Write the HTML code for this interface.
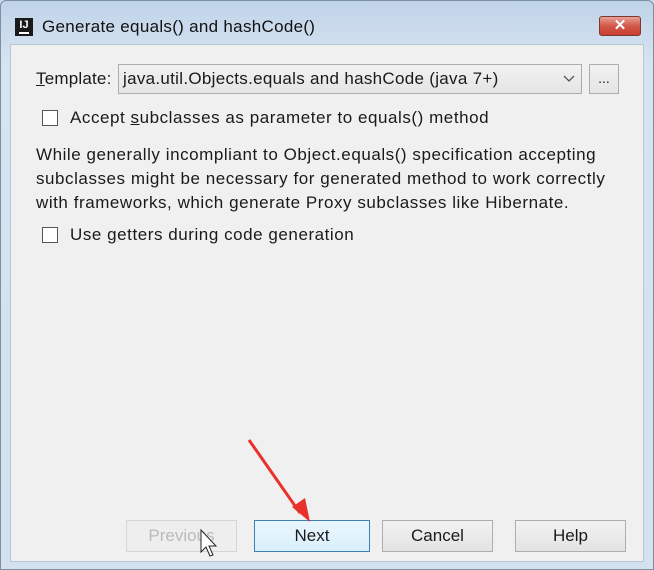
<!DOCTYPE html>
<html><head><meta charset="utf-8"><style>
*{margin:0;padding:0;box-sizing:border-box}
body{width:654px;height:570px;overflow:hidden;background:#ccdcec;font-family:"Liberation Sans",sans-serif;color:#1a1a1a;position:relative}
.frame{position:absolute;left:0;top:0;width:654px;height:570px;background:linear-gradient(#bfd3e8,#d6e3f1 60px,#d3e1f0);border:1px solid #7f8fa0;border-radius:6px 6px 0 0}
.title{position:absolute;left:42px;top:17px;font-size:17px;letter-spacing:0.3px;color:#111}
.icon{position:absolute;left:15px;top:18px;width:18px;height:18px;background:#1a1a1a;color:#fff;font-size:11px;font-weight:bold;text-align:center;line-height:14px}
.icon:after{content:"";position:absolute;left:4px;right:4px;bottom:2px;height:2px;background:#fff}
.close{position:absolute;left:599px;top:16px;width:42px;height:20px;border:1px solid #7a3a30;border-radius:3px;background:linear-gradient(#e9a197,#d2584a 50%,#c8402f);color:#fff;text-align:center;font-size:15px;font-weight:bold;line-height:18px}
.client{position:absolute;left:10px;top:44px;width:634px;height:518px;background:#f0f0f0;border:1px solid #b9c6d4}
.abs{position:absolute;font-size:17px;letter-spacing:0.55px;white-space:nowrap}
.cb{position:absolute;width:16px;height:16px;border:1px solid #555;background:#fff}
.combo{position:absolute;left:118px;top:64px;width:464px;height:30px;border:1px solid #acacac;background:linear-gradient(#f2f2f2,#e5e5e5)}
.dots{position:absolute;left:589px;top:64px;width:30px;height:30px;border:1px solid #acacac;background:linear-gradient(#f2f2f2,#e5e5e5);text-align:center;font-size:14px;line-height:26px}
.btn{position:absolute;top:520px;width:111px;height:32px;border:1px solid #adadad;background:linear-gradient(#f2f2f2,#e3e3e3);text-align:center;font-size:17px;line-height:30px}
</style></head><body>
<div class="frame"></div>
<div class="icon">IJ</div>
<div class="title">Generate equals() and hashCode()</div>
<div class="close">✕</div>
<div class="client"></div>
<div class="abs" style="left:36px;top:69px;letter-spacing:0.2px"><u>T</u>emplate:</div>
<div class="combo"></div>
<div class="abs" style="left:123px;top:69px;letter-spacing:0.3px">java.util.Objects.equals and hashCode (java 7+)</div>
<svg style="position:absolute;left:563px;top:75px" width="12" height="8"><path d="M1 1 L6 6 L11 1" stroke="#555" fill="none" stroke-width="1.3"/></svg>
<div class="dots">...</div>
<div class="cb" style="left:42px;top:110px"></div>
<div class="abs" style="left:70px;top:108px"><span>Accept <u>s</u>ubclasses as parameter to equals() method</span></div>
<div class="abs" style="left:36px;top:143px;line-height:24px">While generally incompliant to Object.equals() specification accepting<br>subclasses might be necessary for generated method to work correctly<br>with frameworks, which generate Proxy subclasses like Hibernate.</div>
<div class="cb" style="left:42px;top:227px"></div>
<div class="abs" style="left:70px;top:225px">Use <u>g</u>etters during code generation</div>
<div class="btn" style="left:126px;color:#bbb;border-color:#d5d5d5;background:#eee">Previous</div>
<div class="btn" style="left:254px;width:116px;border-color:#3c7fb1;background:linear-gradient(#eaf6fd,#d9f0fc)">Next</div>
<div class="btn" style="left:382px">Cancel</div>
<div class="btn" style="left:515px">Help</div>
<svg style="position:absolute;left:0;top:0" width="654" height="570">
<path d="M249 440 L300 513" stroke="#e8312a" stroke-width="3"/>
<path d="M292 507 L310 522 L305 498 Z" fill="#e8312a"/>
<path d="M201 530 L201 552 L206 547 L210 556 L213 555 L209 546 L216 546 Z" fill="#fff" stroke="#222" stroke-width="1"/>
</svg>
</body></html>
